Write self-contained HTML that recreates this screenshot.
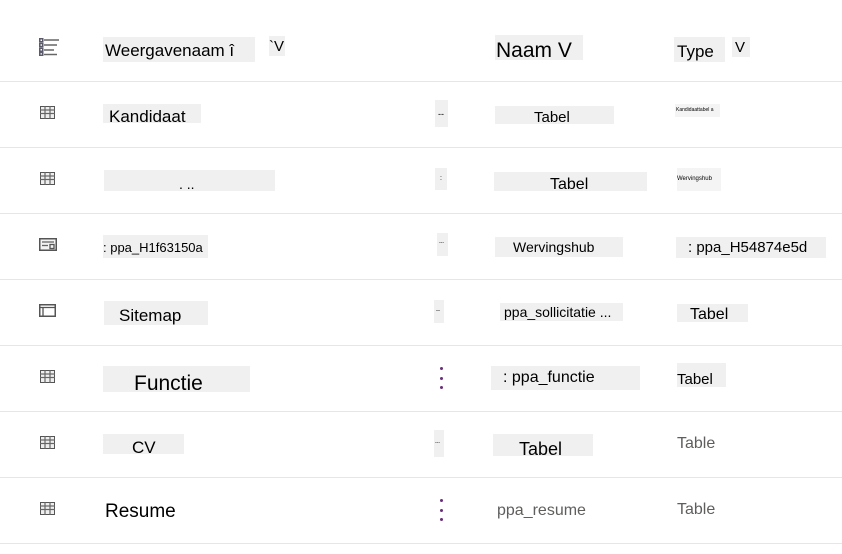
<!DOCTYPE html>
<html><head><meta charset="utf-8"><style>
body{margin:0;width:842px;height:554px;background:#fff;position:relative;overflow:hidden;font-family:"Liberation Sans",sans-serif;color:#000}
.b{position:absolute;background:#f0f0f0;white-space:nowrap;overflow:hidden;box-sizing:border-box;line-height:1}
.t{position:absolute;white-space:nowrap;line-height:1}
.hr{position:absolute;left:0;width:842px;height:1px;background:#e6e6e6}
.ic{position:absolute}
.vd{position:absolute;width:3px}
.vd i{display:block;width:3px;height:3px;border-radius:50%;background:#6b2e7a;margin-bottom:6.5px}
</style></head><body>
<svg class="ic" style="left:39px;top:38px" width="20" height="18" viewBox="0 0 20 18"><g fill="#fff" stroke="#5a5a6a" stroke-width="1.5"><rect x="0.75" y="0.75" width="3" height="3"/><rect x="0.75" y="5.5" width="3" height="3"/><rect x="0.75" y="10.25" width="3" height="3"/><rect x="0.75" y="14.5" width="3" height="2.75"/></g><g stroke="#666" stroke-width="1.5"><line x1="5" y1="2" x2="20" y2="2"/><line x1="5" y1="7" x2="18" y2="7"/><line x1="5" y1="12" x2="15" y2="12"/><line x1="5" y1="16.5" x2="18" y2="16.5"/></g></svg>
<div class="b" style="left:103px;top:37px;width:152px;height:25px;font-size:17px;padding:5px 0 0 2px">Weergavenaam î</div>
<div class="b" style="left:269px;top:36px;width:16px;height:20px;font-size:15px;padding:3px 0 0 0">`V</div>
<div class="b" style="left:495px;top:35px;width:88px;height:25px;font-size:21px;padding:5px 0 0 1px">Naam V</div>
<div class="b" style="left:674px;top:37px;width:51px;height:25px;font-size:17px;padding:6px 0 0 3px">Type</div>
<div class="b" style="left:732px;top:37px;width:18px;height:20px;font-size:15px;padding:3px 0 0 3px">V</div>
<div class="hr" style="top:81px"></div>

<svg class="ic" style="left:40px;top:106px" width="15" height="13" viewBox="0 0 15 13"><rect x="0.5" y="0.5" width="14" height="12" fill="#eee" stroke="#555"/><g stroke="#666" stroke-width="1.2"><line x1="0" y1="4" x2="15" y2="4"/><line x1="0" y1="7.5" x2="15" y2="7.5"/><line x1="5" y1="0" x2="5" y2="13"/><line x1="10" y1="0" x2="10" y2="13"/></g></svg>
<div class="b" style="left:103px;top:104px;width:98px;height:19px;font-size:17px;padding:4px 0 0 6px">Kandidaat</div>
<div class="b" style="left:435px;top:100px;width:13px;height:27px;font-size:9px;padding:10px 0 0 3px">--</div>
<div class="b" style="left:495px;top:106px;width:119px;height:18px;font-size:15px;padding:4px 0 0 39px">Tabel</div>
<div class="b" style="left:675px;top:104px;width:45px;height:13px;font-size:5px;padding:4px 0 0 1px;background:#f4f4f4">Kandidaattabel a</div>
<div class="hr" style="top:147px"></div>

<svg class="ic" style="left:40px;top:172px" width="15" height="13" viewBox="0 0 15 13"><rect x="0.5" y="0.5" width="14" height="12" fill="#eee" stroke="#555"/><g stroke="#666" stroke-width="1.2"><line x1="0" y1="4" x2="15" y2="4"/><line x1="0" y1="7.5" x2="15" y2="7.5"/><line x1="5" y1="0" x2="5" y2="13"/><line x1="10" y1="0" x2="10" y2="13"/></g></svg>
<div class="b" style="left:104px;top:170px;width:171px;height:21px;font-size:14px;padding:7px 0 0 75px">. ..</div>
<div class="b" style="left:435px;top:168px;width:12px;height:22px;font-size:7px;padding:7px 0 0 5px">:</div>
<div class="b" style="left:494px;top:172px;width:153px;height:19px;font-size:16px;padding:5px 0 0 56px">Tabel</div>
<div class="b" style="left:677px;top:168px;width:44px;height:23px;font-size:6px;padding:8px 0 0 0;background:#f4f4f4">Wervingshub</div>
<div class="hr" style="top:213px"></div>

<svg class="ic" style="left:39px;top:238px" width="18" height="13" viewBox="0 0 18 13"><rect x="0.75" y="0.75" width="16.5" height="11.5" fill="#f4f4f4" stroke="#555" stroke-width="1.5"/><line x1="3" y1="4" x2="15" y2="4" stroke="#666" stroke-width="1.3"/><line x1="3" y1="7.5" x2="9" y2="7.5" stroke="#666" stroke-width="1.3"/><rect x="11" y="6.5" width="4" height="4" fill="none" stroke="#555" stroke-width="1.3"/></svg>
<div class="b" style="left:103px;top:235px;width:105px;height:23px;font-size:13px;padding:6px 0 0 0">: ppa_H1f63150a</div>
<div class="b" style="left:437px;top:233px;width:11px;height:23px;font-size:5px;padding:8px 0 0 2px">---</div>
<div class="b" style="left:495px;top:237px;width:128px;height:20px;font-size:14px;padding:3px 0 0 18px">Wervingshub</div>
<div class="b" style="left:676px;top:237px;width:150px;height:21px;font-size:15px;padding:3px 0 0 12px">: ppa_H54874e5d</div>
<div class="hr" style="top:279px"></div>

<svg class="ic" style="left:39px;top:304px" width="17" height="13" viewBox="0 0 17 13"><rect x="0.75" y="0.75" width="15.5" height="11.5" fill="#fff" stroke="#555" stroke-width="1.5"/><line x1="0" y1="3.5" x2="17" y2="3.5" stroke="#555" stroke-width="1.3"/><line x1="4" y1="3" x2="4" y2="13" stroke="#555" stroke-width="1.3"/></svg>
<div class="b" style="left:104px;top:301px;width:104px;height:24px;font-size:17px;padding:6px 0 0 15px">Sitemap</div>
<div class="b" style="left:434px;top:300px;width:10px;height:23px;font-size:6px;padding:8px 0 0 2px">--</div>
<div class="b" style="left:500px;top:303px;width:123px;height:18px;font-size:14px;padding:2px 0 0 4px">ppa_sollicitatie ...</div>
<div class="b" style="left:677px;top:304px;width:71px;height:18px;font-size:16px;padding:3px 0 0 13px">Tabel</div>
<div class="hr" style="top:345px"></div>

<svg class="ic" style="left:40px;top:370px" width="15" height="13" viewBox="0 0 15 13"><rect x="0.5" y="0.5" width="14" height="12" fill="#eee" stroke="#555"/><g stroke="#666" stroke-width="1.2"><line x1="0" y1="4" x2="15" y2="4"/><line x1="0" y1="7.5" x2="15" y2="7.5"/><line x1="5" y1="0" x2="5" y2="13"/><line x1="10" y1="0" x2="10" y2="13"/></g></svg>
<div class="b" style="left:103px;top:366px;width:147px;height:26px;font-size:21px;padding:7px 0 0 31px">Functie</div>
<div class="vd" style="left:440px;top:367px"><i></i><i></i><i></i></div>
<div class="b" style="left:491px;top:366px;width:149px;height:24px;font-size:16px;padding:4px 0 0 12px">: ppa_functie</div>
<div class="b" style="left:677px;top:363px;width:49px;height:24px;font-size:15px;padding:9px 0 0 0">Tabel</div>
<div class="hr" style="top:411px"></div>

<svg class="ic" style="left:40px;top:436px" width="15" height="13" viewBox="0 0 15 13"><rect x="0.5" y="0.5" width="14" height="12" fill="#eee" stroke="#555"/><g stroke="#666" stroke-width="1.2"><line x1="0" y1="4" x2="15" y2="4"/><line x1="0" y1="7.5" x2="15" y2="7.5"/><line x1="5" y1="0" x2="5" y2="13"/><line x1="10" y1="0" x2="10" y2="13"/></g></svg>
<div class="b" style="left:103px;top:434px;width:81px;height:20px;font-size:17px;padding:5px 0 0 29px">CV</div>
<div class="b" style="left:434px;top:430px;width:10px;height:27px;font-size:5px;padding:11px 0 0 1px">---</div>
<div class="b" style="left:493px;top:434px;width:100px;height:22px;font-size:18px;padding:6px 0 0 26px">Tabel</div>
<div class="t" style="left:677px;top:436px;font-size:16px;color:#605e5c">Table</div>
<div class="hr" style="top:477px"></div>

<svg class="ic" style="left:40px;top:502px" width="15" height="13" viewBox="0 0 15 13"><rect x="0.5" y="0.5" width="14" height="12" fill="#eee" stroke="#555"/><g stroke="#666" stroke-width="1.2"><line x1="0" y1="4" x2="15" y2="4"/><line x1="0" y1="7.5" x2="15" y2="7.5"/><line x1="5" y1="0" x2="5" y2="13"/><line x1="10" y1="0" x2="10" y2="13"/></g></svg>
<div class="t" style="left:105px;top:502px;font-size:19px">Resume</div>
<div class="vd" style="left:440px;top:499px"><i></i><i></i><i></i></div>
<div class="t" style="left:497px;top:503px;font-size:16px;color:#605e5c">ppa_resume</div>
<div class="t" style="left:677px;top:502px;font-size:16px;color:#605e5c">Table</div>
<div class="hr" style="top:543px"></div>
</body></html>
